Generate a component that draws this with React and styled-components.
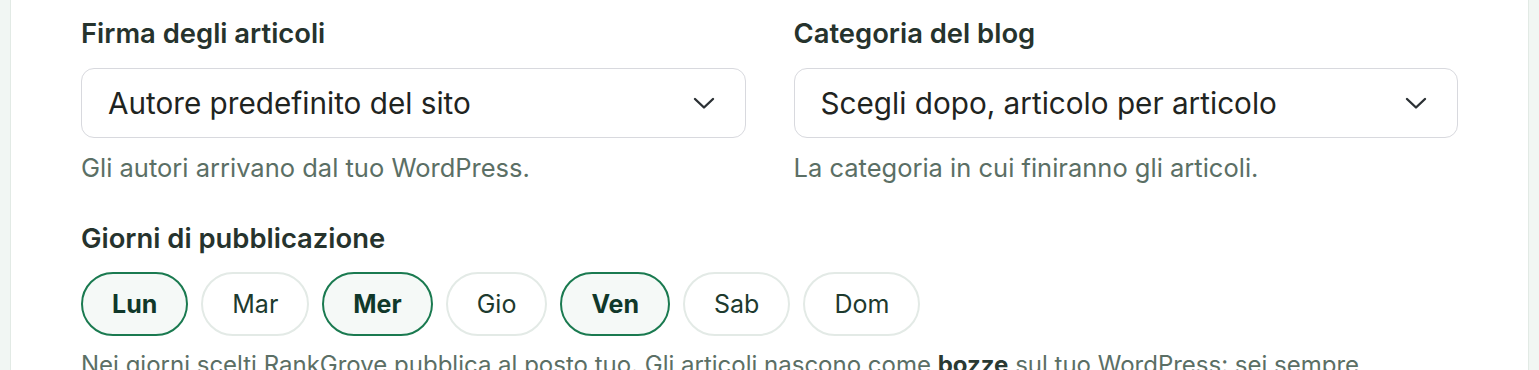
import React, { useState } from "react";
import styled, { createGlobalStyle } from "styled-components";

const GlobalStyle = createGlobalStyle`
  html, body { margin: 0; padding: 0; background: #f1f6f3; }
  body { font-family: "Inter", "Noto Sans", sans-serif; -webkit-font-smoothing: antialiased; }
  * { box-sizing: border-box; }
`;

const Page = styled.div`
  padding: 0 10px;
  height: 370px;
  overflow: hidden;
`;

const Card = styled.div`
  background: #ffffff;
  border-left: 1px solid #e2eae5;
  border-right: 1px solid #e2eae5;
  padding: 17px 70px 40px 70px;
  min-height: 370px;
`;

const Grid = styled.div`
  display: grid;
  grid-template-columns: 1fr 1fr;
  column-gap: 48px;
`;

const Field = styled.div`
  display: flex;
  flex-direction: column;
`;

const Label = styled.div`
  font-size: 27.4px;
  line-height: 32px;
  font-weight: 600;
  color: #26332d;
`;

const Select = styled.div`
  margin-top: 19px;
  height: 70px;
  border: 1.5px solid #d8d9de;
  border-radius: 13px;
  display: flex;
  align-items: center;
  justify-content: space-between;
  padding: 0 30px 0 26px;
  font-size: 29.7px;
  color: #1f2421;
`;

const Help = styled.div`
  margin-top: 15px;
  font-size: 25.5px;
  line-height: 30px;
  color: #5b6f65;
`;

const Section = styled.div`
  margin-top: 39px;
`;

const Pills = styled.div`
  margin-top: 18px;
  display: flex;
  gap: 13px;
`;

const Pill = styled.button`
  height: 64px;
  padding: 0 29px;
  border-radius: 999px;
  font-family: inherit;
  font-size: 25px;
  cursor: pointer;
  border: ${(p) => (p.$active ? "2px solid #1a7a50" : "2px solid #e3eae6")};
  background: ${(p) => (p.$active ? "#f5f9f7" : "#ffffff")};
  color: ${(p) => (p.$active ? "#10382a" : "#1d3a2e")};
  font-weight: ${(p) => (p.$active ? 700 : 400)};
`;

const Para = styled.p`
  margin: 11px 0 0;
  font-size: 24px;
  line-height: 36px;
  color: #5b6f65;
  b { color: #2a3a33; font-weight: 700; }
`;

const Chevron = () => (
  <svg width="22" height="13" viewBox="0 0 22 13" fill="none">
    <path d="M2 2 L11 10.5 L20 2" stroke="#2b3034" strokeWidth="2.4" strokeLinecap="round" strokeLinejoin="round" />
  </svg>
);

const days = ["Lun", "Mar", "Mer", "Gio", "Ven", "Sab", "Dom"];

export default function App() {
  const [active, setActive] = useState(["Lun", "Mer", "Ven"]);
  const toggle = (d) =>
    setActive((a) => (a.includes(d) ? a.filter((x) => x !== d) : [...a, d]));
  return (
    <>
      <GlobalStyle />
      <Page>
        <Card>
          <Grid>
            <Field>
              <Label>Firma degli articoli</Label>
              <Select>
                <span>Autore predefinito del sito</span>
                <Chevron />
              </Select>
              <Help>Gli autori arrivano dal tuo WordPress.</Help>
            </Field>
            <Field>
              <Label>Categoria del blog</Label>
              <Select>
                <span>Scegli dopo, articolo per articolo</span>
                <Chevron />
              </Select>
              <Help>La categoria in cui finiranno gli articoli.</Help>
            </Field>
          </Grid>
          <Section>
            <Label>Giorni di pubblicazione</Label>
            <Pills>
              {days.map((d) => (
                <Pill key={d} $active={active.includes(d)} onClick={() => toggle(d)}>
                  {d}
                </Pill>
              ))}
            </Pills>
            <Para>
              Nei giorni scelti RankGrove pubblica al posto tuo. Gli articoli nascono come <b>bozze</b> sul tuo WordPress: sei sempre
              responsabile dell'ultima parola prima della pubblicazione.
            </Para>
          </Section>
        </Card>
      </Page>
    </>
  );
}
